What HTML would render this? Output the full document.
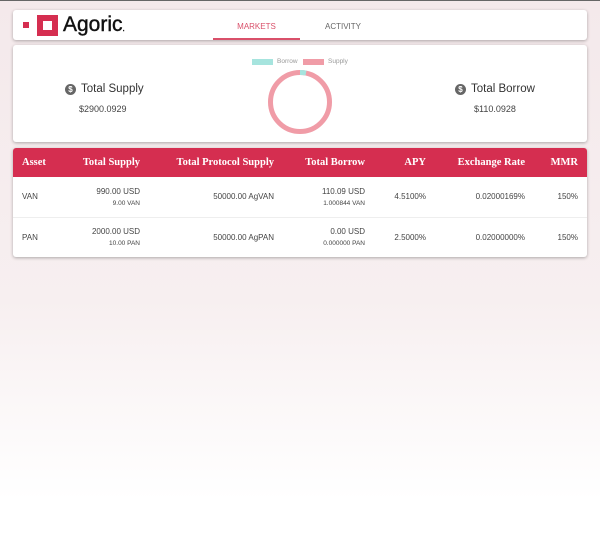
<!DOCTYPE html>
<html><head><style>
*{margin:0;padding:0;box-sizing:border-box}
body{width:600px;height:542px;overflow:hidden;font-family:"Liberation Sans",sans-serif;background:linear-gradient(#f4e9eb 0px,#f7eff0 300px,#ffffff 500px);position:relative;color:#444}
.top{position:absolute;left:0;top:0;width:600px;height:1px;background:#666}
.card{position:absolute;left:13px;width:574px;background:#fff;border-radius:3px;box-shadow:0 1px 3px rgba(0,0,0,.3)}
.a{position:absolute;white-space:nowrap}
table{border-collapse:collapse;width:574px;font-size:8px;table-layout:fixed}
th{background:#d52e50;color:#fff;font-family:"Liberation Serif",serif;font-weight:bold;font-size:10.5px;height:29px;text-align:right;padding:0 9px 0 0;white-space:nowrap}
td{height:40px;text-align:right;padding:0 9px 0 0;color:#444;border-bottom:1px solid #eee;white-space:nowrap}
td small{font-size:6.5px;display:block;margin-top:4px}
</style></head><body>
<div class="top"></div>
<div class="card" style="top:10px;height:30px">
 <div class="a" style="left:10px;top:12px;width:6px;height:6px;background:#d52e50"></div>
 <div class="a" style="left:24px;top:5px;width:21px;height:21px;background:#d52e50"><div style="position:absolute;left:6px;top:6px;width:9px;height:9px;background:#fff"></div></div>
 <div class="a" style="left:50px;top:3px;font-size:21px;color:#111;-webkit-text-stroke:0.4px #111">Agoric<span style="font-size:8px">.</span></div>
 <div class="a" style="left:200px;top:0;width:87px;height:30px;border-bottom:2px solid #d9506a;text-align:center;font-size:8px;line-height:34px;color:#d9506a">MARKETS</div>
 <div class="a" style="left:287px;top:0;width:86px;text-align:center;font-size:8px;line-height:34px;color:#666">ACTIVITY</div>
</div>
<div class="card" style="top:45px;height:97px">
 <div class="a" style="left:52px;top:39px;width:11px;height:11px;border-radius:50%;background:#666;color:#fff;font-size:8px;text-align:center;line-height:11px;font-weight:bold">$</div>
 <div class="a" style="left:68px;top:38px;font-size:11.5px;color:#333">Total Supply</div>
 <div class="a" style="left:66px;top:59px;font-size:9px;color:#444">$2900.0929</div>
 <div class="a" style="width:11px;height:11px;border-radius:50%;background:#666;color:#fff;font-size:8px;text-align:center;line-height:11px;font-weight:bold;left:442px;top:39px">$</div>
 <div class="a" style="left:458px;top:38px;font-size:11.5px;color:#333">Total Borrow</div>
 <div class="a" style="left:461px;top:59px;font-size:9px;color:#444">$110.0928</div>
 <div class="a" style="left:239px;top:14px;width:21px;height:6px;background:#a6e4de"></div>
 <div class="a" style="left:264px;top:13px;font-size:6.5px;color:#999">Borrow</div>
 <div class="a" style="left:290px;top:14px;width:21px;height:6px;background:#f09ca7"></div>
 <div class="a" style="left:315px;top:13px;font-size:6.5px;color:#999">Supply</div>
 <svg class="a" style="left:254px;top:24px" width="66" height="66" viewBox="0 0 66 66">
  <circle cx="33" cy="33" r="29.5" fill="none" stroke="#f09ca7" stroke-width="5"/>
  <path d="M33 3.5 A29.5 29.5 0 0 1 39 4.1" fill="none" stroke="#a6e4de" stroke-width="5"/>
 </svg>
</div>
<div class="card" style="top:148px;height:109px;overflow:hidden">
<table>
<colgroup><col style="width:55px"><col style="width:81px"><col style="width:134px"><col style="width:91px"><col style="width:61px"><col style="width:99px"><col style="width:53px"></colgroup>
<tr><th style="text-align:left;padding-left:9px">Asset</th><th>Total Supply</th><th>Total Protocol Supply</th><th>Total Borrow</th><th>APY</th><th>Exchange Rate</th><th>MMR</th></tr>
<tr><td style="text-align:left;padding-left:9px">VAN</td><td>990.00 USD<small>9.00 VAN</small></td><td>50000.00 AgVAN</td><td>110.09 USD<small>1.000844 VAN</small></td><td>4.5100%</td><td>0.02000169%</td><td>150%</td></tr>
<tr><td style="text-align:left;padding-left:9px">PAN</td><td>2000.00 USD<small>10.00 PAN</small></td><td>50000.00 AgPAN</td><td>0.00 USD<small>0.000000 PAN</small></td><td>2.5000%</td><td>0.02000000%</td><td>150%</td></tr>
</table>
</div>
</body></html>
